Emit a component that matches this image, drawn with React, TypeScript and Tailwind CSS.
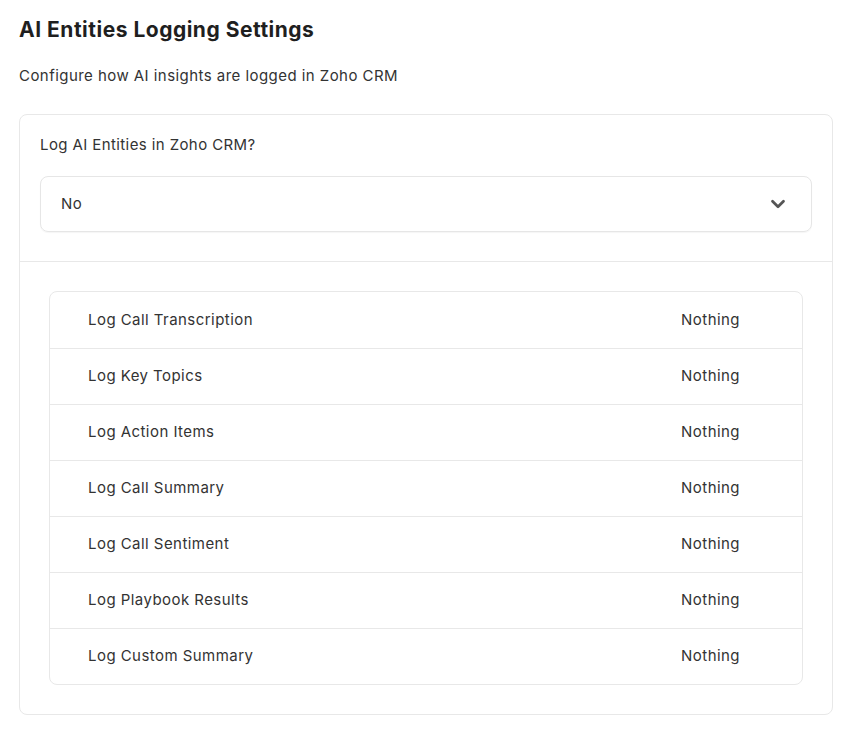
import { ChevronDown } from 'lucide-react';

const rows = [
    'Log Call Transcription',
    'Log Key Topics',
    'Log Action Items',
    'Log Call Summary',
    'Log Call Sentiment',
    'Log Playbook Results',
    'Log Custom Summary',
];

export default function App() {
    return (
        <div className="min-h-screen bg-white px-[19px] pt-[16px] text-[#2b2b2b]" style={{ fontFamily: 'Inter, "Noto Sans", sans-serif' }}>
            <h1 className="text-[21px] font-bold leading-[28px] tracking-[0.5px] text-[#1f1f1f]">AI Entities Logging Settings</h1>
            <p className="mt-[22px] text-[15px] leading-[20px] tracking-[0.45px] text-[#333]">Configure how AI insights are logged in Zoho CRM</p>

            <div className="mt-[28px] w-[814px] rounded-lg border border-[#e8e8e8] bg-white">
                <div className="px-[20px] pt-[20px] pb-[29px]">
                    <label className="block text-[15px] leading-[20px] tracking-[0.4px] text-[#333]">Log AI Entities in Zoho CRM?</label>
                    <div className="mt-[21px] flex h-[56px] items-center justify-between rounded-lg border border-[#e6e6e6] pl-[20px] pr-[22px] shadow-[0_1px_1px_rgba(0,0,0,0.04)]">
                        <span className="text-[15px] tracking-[0.4px] text-[#333]">No</span>
                        <ChevronDown className="h-[22px] w-[22px] text-[#555]" strokeWidth={3} />
                    </div>
                </div>
                <div className="border-t border-[#e8e8e8] px-[29px] py-[29px]">
                    <div className="overflow-hidden rounded-lg border border-[#e8e8e8]">
                        {rows.map((r, i) => (
                            <div
                                key={r}
                                className={`flex h-[56px] items-center justify-between pl-[38px] pr-[62px] text-[15px] tracking-[0.45px] text-[#333] ${i > 0 ? 'border-t border-[#e8e8e8]' : ''}`}
                            >
                                <span>{r}</span>
                                <span>Nothing</span>
                            </div>
                        ))}
                    </div>
                </div>
            </div>
        </div>
    );
}
